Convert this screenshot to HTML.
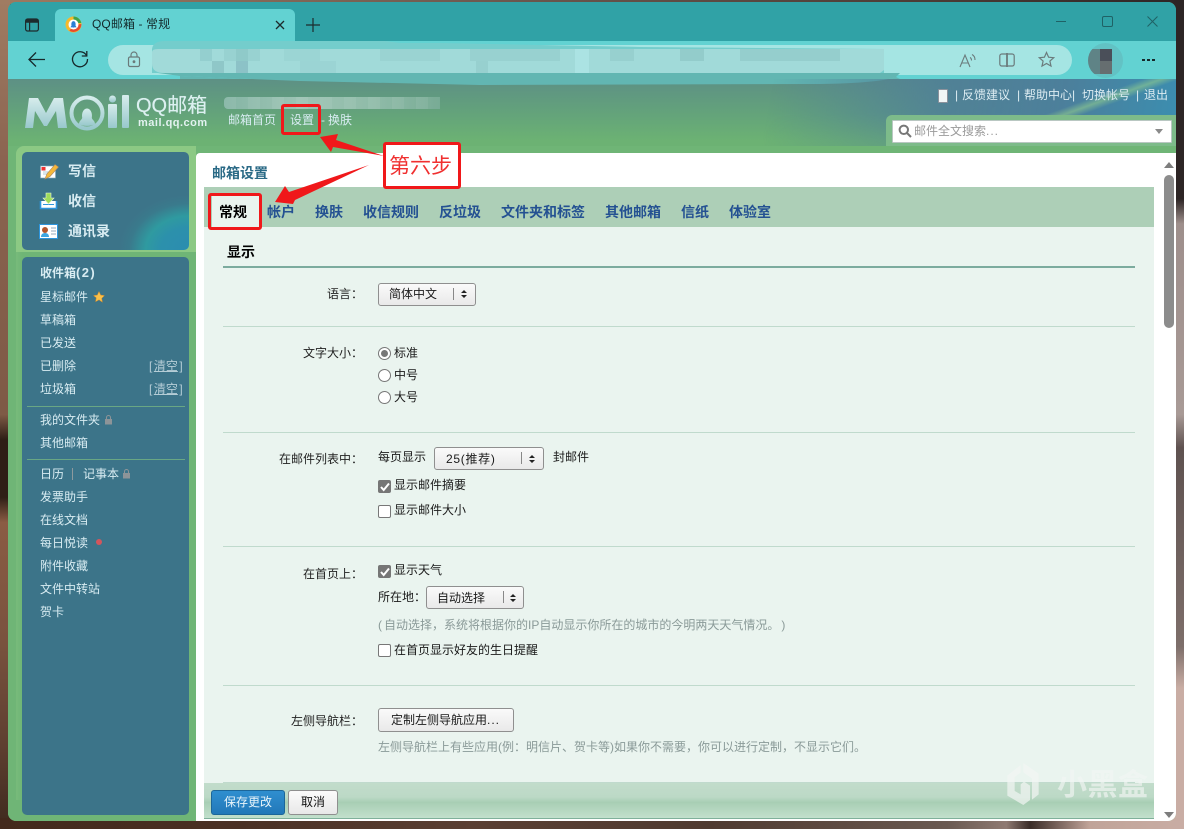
<!DOCTYPE html>
<html lang="zh"><head><meta charset="utf-8"><title>QQ邮箱 - 常规</title>
<style>
html,body{margin:0;padding:0;width:1184px;height:829px;overflow:hidden}
body{position:relative;background:#4f3a30;font:12px/16px "Liberation Sans","Noto Sans CJK SC",sans-serif;color:#1a1a1a}
div,svg{position:absolute}
.t{white-space:nowrap}
.b{font-weight:700}
.s{color:#d8ecf2;font-size:12px;left:40px}
.lb{color:#222;text-align:right;width:120px;left:243px}
.hr{left:223px;width:912px;height:1px;background:#c0dacd}
.tab{top:204px;font-size:14px;font-weight:700;color:#245192;white-space:nowrap}
.sel{height:21px;border:1px solid #8f8f8f;border-radius:3px;background:linear-gradient(#fafafa,#e9e9e9)}
.cb{width:11px;height:11px;border:1px solid #777;border-radius:2px;background:#fff}
.cb.on{background:#767676;border-color:#767676}
.rd{width:11px;height:11px;border:1px solid #777;border-radius:50%;background:#fff}
.gray{color:#8a9a98}
.lk{color:#d8ecf2;white-space:nowrap}
.red{border:3px solid #f0181a;border-radius:3px;box-sizing:border-box}
u.n{text-decoration:none}
</style></head><body>

<!-- desktop backdrop -->
<div style="left:0;top:0;width:1184px;height:4px;background:linear-gradient(90deg,#9c7a60,#6e5a50 40%,#4a3a34 80%,#2d2525)"></div>
<div style="left:0;top:0;width:10px;height:829px;background:linear-gradient(#a07c62 0,#8a6350 20%,#7e5a46 50%,#2f1f16 53%,#2f1f16 60%,#8a5c44 63%,#7a533f 77%,#5e3f30 90%,#3e2a1e 100%)"></div>
<div style="left:1174px;top:0;width:10px;height:829px;background:linear-gradient(#2d2525 0,#2d2525 24%,#9e8f8c 27%,#a89a96 50%,#5f5250 54%,#7d6e6a 78%,#c9ada4 83%,#c9ada4 100%)"></div>
<div style="left:0;top:818px;width:1184px;height:11px;background:linear-gradient(90deg,#43291c 0,#4a3024 20%,#5a3f33 40%,#4f3a30 60%,#6a5a52 80%,#8f7a72 85%,#3a2c28 87%,#c0a398 92%,#c9ada4 100%)"></div>

<!-- window -->
<div style="left:8px;top:2px;width:1168px;height:819px;border-radius:8px;overflow:hidden;background:#6fb576">
  <div style="left:0;top:0;width:1168px;height:39px;background:#30a2a6"></div>
  <div style="left:0;top:39px;width:1168px;height:40px;background:#62d2d2"></div>
</div>

<!-- tab strip -->
<svg style="left:24px;top:17px" width="16" height="16" viewBox="0 0 16 16" fill="none" stroke="#1c2b2d" stroke-width="1.2"><rect x="1.6" y="2" width="12.8" height="12" rx="2"/><path d="M1.6 5.2h12.8M5.6 5.2V14"/><path d="M2 2.5h12v2.5H2z" fill="#1c2b2d" stroke="none"/></svg>
<div style="left:55px;top:9px;width:240px;height:32px;background:#62d2d2;border-radius:6px 6px 0 0"></div>
<svg style="left:65px;top:16px" width="17" height="17" viewBox="0 0 17 17"><circle cx="8.5" cy="8.5" r="8" fill="#f6b92b"/><path d="M8.5.5A8 8 0 0 1 16.3 7H8.5z" fill="#3ea34b"/><path d="M16.4 8a8 8 0 0 1-12 6.900L8.500 9z" fill="#e84a2c"/><circle cx="8.500" cy="8.500" r="5" fill="#fff"/><path d="M5.500 11.500c.2-1 .8-1.400 1-2-.6-2.800.7-4.400 2-4.400s2.600 1.600 2 4.400c.2.600.8 1 1 2l-1.600-.3c-.7.500-2.100.500-2.800 0z" fill="#2a7fd5"/></svg>
<div class="t" style="left:92px;top:16px;font-size:12px;letter-spacing:.1px;color:#14292b">QQ邮箱 - 常规</div>
<svg style="left:274px;top:19px" width="12" height="12" viewBox="0 0 12 12" stroke="#1c2b2d" stroke-width="1.300"><path d="M2 2l8 8M10 2l-8 8"/></svg>
<svg style="left:305px;top:17px" width="16" height="16" viewBox="0 0 16 16" stroke="#1c2b2d" stroke-width="1.200"><path d="M8 1v14M1 8h14"/></svg>
<div style="left:1056px;top:21px;width:10px;height:1px;background:#1f6266"></div>
<div style="left:1102px;top:16px;width:9px;height:9px;border:1px solid #1f6266;border-radius:2px"></div>
<svg style="left:1147px;top:16px" width="11" height="11" viewBox="0 0 11 11" stroke="#1f6266" stroke-width="1"><path d="M.5.5l10 10M10.500.5l-10 10"/></svg>

<!-- toolbar -->
<div style="left:108px;top:45px;width:964px;height:30px;border-radius:15px;background:#a5e5e3"></div>
<svg style="left:127px;top:51px" width="14" height="17" viewBox="0 0 14 17" fill="none" stroke="#6a7a7a" stroke-width="1.200"><rect x="1.500" y="6" width="11" height="9.500" rx="1.500"/><path d="M4 6V4a3 3 0 0 1 6 0v2"/><circle cx="7" cy="10.700" r=".8" fill="#6a7a7a"/></svg>
<svg style="left:27px;top:50px" width="19" height="19" viewBox="0 0 19 19" fill="none" stroke="#16292b" stroke-width="1.300"><path d="M18 9.500H2M9 2.500l-7 7 7 7"/></svg>
<svg style="left:71px;top:50px" width="18" height="18" viewBox="0 0 18 18" fill="none" stroke="#16292b" stroke-width="1.300"><path d="M15.500 5.500A7.500 7.500 0 1 0 16.500 9"/><path d="M15.800 1v5h-5"/></svg>

<!-- blurred url -->
<svg style="left:0;top:0" width="1184" height="110" viewBox="0 0 1184 110">
  <path d="M152 49 Q153 41 165 41 H385 L400 43 H440 L640 47 L884 49 V73 H152 Z" fill="#74cdcc"/>
  <path d="M152 52 Q152 49 158 49 H884 V70 L880 73 H165 Q152 73 152 64 Z" fill="#a1dad9"/>
  <g>
    <rect x="200" y="49" width="12" height="12" fill="#94cfcf"/><rect x="224" y="49" width="36" height="12" fill="#98d2d1"/><rect x="236" y="49" width="12" height="12" fill="#8fcac9"/>
    <rect x="212" y="61" width="12" height="12" fill="#8fc7c8"/><rect x="236" y="61" width="12" height="12" fill="#8cc2c7"/><rect x="284" y="49" width="36" height="12" fill="#9bd5d4"/>
    <rect x="380" y="49" width="60" height="12" fill="#9ad3d2"/><rect x="470" y="49" width="90" height="12" fill="#98d1d0"/><rect x="575" y="49" width="14" height="24" fill="#abe3e3"/>
    <rect x="610" y="49" width="24" height="12" fill="#97d0cf"/><rect x="680" y="49" width="24" height="12" fill="#93cccb"/><rect x="740" y="49" width="100" height="12" fill="#95cecd"/>
    <rect x="476" y="61" width="12" height="12" fill="#97d0cf"/><rect x="300" y="61" width="36" height="12" fill="#9bd4d4"/>
  </g>
  <path d="M158 73 H900 L896 77 Q880 83 820 84 L480 85 L300 81 L180 76 Z" fill="#62b6b2"/>
</svg>

<svg style="left:959px;top:52px" width="18" height="16" viewBox="0 0 18 16" fill="none" stroke="#6b7b7c" stroke-width="1.100"><path d="M1 15L6 3l5 12M2.800 11h6.500M11 5.500c1 .5 1.500 1.500 1.500 3M13 2.500c2 1 3 3 3 5.500"/></svg>
<svg style="left:999px;top:53px" width="16" height="14" viewBox="0 0 16 14" fill="none" stroke="#6b7b7c" stroke-width="1.200"><rect x=".8" y="1" width="14.400" height="12" rx="2"/><path d="M8 0v14" stroke-width="1.800"/></svg>
<svg style="left:1038px;top:51px" width="17" height="17" viewBox="0 0 17 17" fill="none" stroke="#6b7b7c" stroke-width="1.200"><path d="M8.500 1.500l2.100 4.700 5.100.5-3.800 3.400 1.100 5-4.500-2.600-4.500 2.600 1.100-5L1.300 6.700l5.100-.5z"/></svg>
<div style="left:1088px;top:43px;width:35px;height:35px;border-radius:50%;overflow:hidden;background:#62c2c4">
  <div style="left:0;top:6px;width:12px;height:25px;background:#5f8386"></div>
  <div style="left:12px;top:6px;width:12px;height:12px;background:#4a4f59"></div>
  <div style="left:12px;top:18px;width:12px;height:13px;background:#666e70"></div>
</div>
<div style="left:1142px;top:59px;width:3px;height:2px;background:#16292b;box-shadow:5px 0 #16292b,10px 0 #16292b"></div>

<!-- mail header -->
<div style="left:8px;top:79px;width:1168px;height:73px;background:linear-gradient(#5d9085 0,#64a47a 50%,#6cb273 85%)"></div>
<svg style="left:0;top:0" width="1184" height="90" viewBox="0 0 1184 90"><path d="M180 76 L300 81 L480 85 L820 84 Q880 83 896 77 L900 79 H180 Z" fill="#62b6b2"/></svg>
<div style="left:700px;top:79px;width:476px;height:68px;background:linear-gradient(100deg,rgba(79,127,152,0) 15%,rgba(79,127,152,.9) 52%,#4c7f9b 75%,#3b8eb0 100%);-webkit-mask-image:linear-gradient(#000 0,#000 50%,rgba(0,0,0,.5) 100%)"></div>
<div style="left:960px;top:79px;width:216px;height:60px;background:linear-gradient(160deg,rgba(150,210,140,0) 48%,rgba(150,210,140,.55) 53%,rgba(150,210,140,0) 58%)"></div>
<div style="left:8px;top:146px;width:1168px;height:6px;background:#6fb576"></div>

<!-- logo -->
<svg style="left:24px;top:95px" width="108" height="36" viewBox="0 0 108 36"><defs><linearGradient id="lg" x1="0" y1="0" x2="0" y2="1"><stop offset="0" stop-color="#d6ecec"/><stop offset="1" stop-color="#98c8cc"/></linearGradient></defs>
<path d="M1 33L5 3h9l8 15 8-15h9l4 30h-9l-2-17-9 15h-3L11 16 9 33z" fill="url(#lg)"/>
<circle cx="63" cy="18" r="15.500" fill="none" stroke="url(#lg)" stroke-width="4"/>
<path d="M55 29c0-3 2.500-4 3.200-6-1-6 2-9.500 4.800-9.500s5.800 3.500 4.800 9.500c.7 2 3.200 3 3.200 6-2.500 2.500-13.500 2.500-16 0z" fill="url(#lg)"/>
<rect x="84" y="9" width="9" height="24" rx="1" fill="url(#lg)"/><circle cx="88.500" cy="4" r="3.500" fill="url(#lg)"/>
<rect x="98" y="0" width="7" height="33" rx="1" fill="url(#lg)"/></svg>
<div class="t" style="left:136px;top:94px;font-size:20px;line-height:24px;color:#dcf0f0;text-shadow:0 0 .5px #dcf0f0">QQ邮箱</div>
<div class="t b" style="left:138px;top:115px;font-size:11px;color:#e3f2f0;letter-spacing:.5px">mail.qq.com</div>

<!-- blurred name -->
<div style="left:224px;top:97px;width:216px;height:12px;border-radius:4px 0 0 4px;background:repeating-linear-gradient(90deg,rgba(255,255,255,.06) 0,rgba(255,255,255,.06) 12px,rgba(255,255,255,0) 12px,rgba(255,255,255,0) 24px),linear-gradient(90deg,#85b5a5,#9dc4b4 35%,#8fbba8 70%,#78ab95)"></div>
<div class="lk" style="left:228px;top:112px">邮箱首页</div>
<div class="lk" style="left:290px;top:112px">设置</div>
<div class="lk" style="left:321px;top:112px">-</div>
<div class="lk" style="left:328px;top:112px">换肤</div>

<!-- top right links -->
<div style="left:938px;top:89px;width:8px;height:12px;background:#f1f6f6;border:1px solid #8b929c;border-radius:1px;box-sizing:content-box"></div>
<div class="t" style="left:955px;top:87px;color:#dcecf2">|</div>
<div class="t" style="left:962px;top:87px;color:#dcecf2">反馈建议</div>
<div class="t" style="left:1017px;top:87px;color:#dcecf2">|</div>
<div class="t" style="left:1024px;top:87px;color:#dcecf2">帮助中心|</div>
<div class="t" style="left:1082px;top:87px;color:#dcecf2">切换帐号</div>
<div class="t" style="left:1136px;top:87px;color:#dcecf2">|</div>
<div class="t" style="left:1144px;top:87px;color:#dcecf2">退出</div>
<!-- search -->
<div style="left:886px;top:115px;width:290px;height:31px;background:#7dbb8a;border-radius:6px 0 0 0"></div>
<div style="left:892px;top:120px;width:278px;height:21px;background:#fff;border:1px solid #b9c7c2;border-radius:1px"></div>
<svg style="left:898px;top:124px" width="14" height="14" viewBox="0 0 14 14" fill="none" stroke="#777" stroke-width="2"><circle cx="5.800" cy="5.800" r="4.200"/><path d="M9 9l4 4"/></svg>
<div class="t" style="left:914px;top:123px;color:#9a9a9a">邮件全文搜索<u class="n" style="letter-spacing:1px">...</u></div>
<div style="left:1155px;top:129px;border:4px solid transparent;border-top:5px solid #8a8a8a;border-bottom:0"></div>

<!-- sidebar -->
<div style="left:16px;top:146px;width:180px;height:675px;background:#8cc984;border-radius:8px 0 0 8px"></div>
<div style="left:16px;top:252px;width:180px;height:569px;background:linear-gradient(90deg,#78bb7b,#6fb576 6px)"></div>
<div style="left:8px;top:800px;width:188px;height:21px;background:#6fb576;border-radius:0 0 0 8px"></div>
<div style="left:22px;top:152px;width:167px;height:98px;background:radial-gradient(ellipse 70px 55px at 100% 100%,#2b8db0 0,#2c90ac 40%,#2f9aa0 62%,#3a7a8c 85%,#3c7489 100%);border-radius:5px"></div>
<div style="left:22px;top:257px;width:167px;height:558px;background:#3c7489;border-radius:5px"></div>

<!-- icons -->
<svg style="left:40px;top:163px" width="20" height="18" viewBox="0 0 20 18"><rect x=".5" y="3" width="15" height="12" fill="#fff" stroke="#8ab" stroke-width=".6"/><rect x="1.500" y="4" width="4" height="3.500" fill="#e33"/><path d="M3 9h6M3 11h4" stroke="#9bc" stroke-width=".8"/><path d="M5 16l1.800-5 8.200-9.500 3.500 2.500-8.500 9.500z" fill="#f5b83a" stroke="#a86" stroke-width=".6"/></svg>
<svg style="left:39px;top:192px" width="19" height="18" viewBox="0 0 19 18"><path d="M1.500 9v7.500h16V9" fill="#fff" stroke="#2d95dd" stroke-width="1.600"/><path d="M4 12.500h11" stroke="#2d95dd" stroke-width="1"/><path d="M7 1h5v5h3l-5.500 6L4 6h3z" fill="#9fdc5a" stroke="#e9f7d8" stroke-width=".6"/></svg>
<svg style="left:39px;top:224px" width="19" height="15" viewBox="0 0 19 15"><rect x=".5" y=".5" width="18" height="14" fill="#fff" stroke="#2d95dd"/><circle cx="6" cy="6" r="3" fill="#b3552a"/><path d="M2 13c0-3 2-4 4-4s4 1 4 4z" fill="#3da5e0"/><path d="M12 4h5M12 7h5M12 10h5" stroke="#9ab" stroke-width="1"/></svg>
<div class="t b" style="left:68px;top:163px;font-size:14px;color:#d8ecf2">写信</div>
<div class="t b" style="left:68px;top:193px;font-size:14px;color:#d8ecf2">收信</div>
<div class="t b" style="left:68px;top:223px;font-size:14px;color:#d8ecf2">通讯录</div>

<div class="t s b" style="top:265px">收件箱<u class="n" style="font-size:13px;letter-spacing:1.400px">(2)</u></div>
<div class="t s" style="top:289px">星标邮件</div>
<svg style="left:93px;top:291px" width="12" height="12" viewBox="0 0 12 12"><path d="M6 .5l1.700 3.600 3.800.5-2.800 2.700.7 3.900L6 8.800l-3.400 1.900.7-3.900L.5 4.600l3.800-.5z" fill="#f9c14a" stroke="#d68a2a" stroke-width=".5"/></svg>
<div class="t s" style="top:312px">草稿箱</div>
<div class="t s" style="top:335px">已发送</div>
<div class="t s" style="top:358px">已删除</div>
<div class="t s" style="top:381px">垃圾箱</div>
<div class="t" style="left:149px;top:358px;color:#b5cdd6">[<u style="margin:0 1.500px">清空</u>]</div>
<div class="t" style="left:149px;top:381px;color:#b5cdd6">[<u style="margin:0 1.500px">清空</u>]</div>
<div style="left:27px;top:406px;width:158px;height:1px;background:#69a784"></div>
<div class="t s" style="top:412px">我的文件夹</div>
<svg style="left:104px;top:415px" width="9" height="10" viewBox="0 0 9 10" fill="#8d9498"><rect x="1" y="4" width="7" height="5.500"/><path d="M2.500 4V2.500a2 2 0 0 1 4 0V4" fill="none" stroke="#8d9498"/></svg>
<div class="t s" style="top:435px">其他邮箱</div>
<div style="left:27px;top:459px;width:158px;height:1px;background:#69a784"></div>
<div class="t s" style="top:466px">日历</div>
<div style="left:72px;top:468px;width:1px;height:12px;background:#8d9a9e"></div>
<div class="t s" style="left:83px;top:466px">记事本</div>
<svg style="left:122px;top:469px" width="9" height="10" viewBox="0 0 9 10" fill="#8d9498"><rect x="1" y="4" width="7" height="5.500"/><path d="M2.500 4V2.500a2 2 0 0 1 4 0V4" fill="none" stroke="#8d9498"/></svg>
<div class="t s" style="top:489px">发票助手</div>
<div class="t s" style="top:512px">在线文档</div>
<div class="t s" style="top:535px">每日悦读</div>
<div style="left:96px;top:539px;width:6px;height:6px;border-radius:50%;background:#d4555c"></div>
<div class="t s" style="top:558px">附件收藏</div>
<div class="t s" style="top:581px">文件中转站</div>
<div class="t s" style="top:604px">贺卡</div>

<!-- main -->
<div style="left:196px;top:153px;width:980px;height:668px;background:#fff;border-radius:4px 0 8px 0"></div>
<div class="t b" style="left:212px;top:165px;font-size:14px;color:#2a6a86">邮箱设置</div>
<div style="left:204px;top:187px;width:950px;height:40px;background:#adcfb7"></div>
<div style="left:204px;top:227px;width:950px;height:556px;background:#eaf4ef"></div>
<div style="left:212px;top:196px;width:47px;height:31px;background:#eaf4ef"></div>
<div class="t b" style="left:219px;top:204px;font-size:14px;color:#000">常规</div>
<div class="tab" style="left:267px">帐户</div>
<div class="tab" style="left:315px">换肤</div>
<div class="tab" style="left:363px">收信规则</div>
<div class="tab" style="left:439px">反垃圾</div>
<div class="tab" style="left:501px">文件夹和标签</div>
<div class="tab" style="left:605px">其他邮箱</div>
<div class="tab" style="left:681px">信纸</div>
<div class="tab" style="left:729px">体验室</div>

<div class="t b" style="left:227px;top:244px;font-size:14px;color:#000">显示</div>
<div style="left:223px;top:266px;width:912px;height:2px;background:#7cab9e"></div>

<div class="t lb" style="top:286px">语言：</div>
<div class="sel" style="left:378px;top:283px;width:96px"></div>
<div class="t" style="left:389px;top:286px">简体中文</div>
<div style="left:453px;top:288px;width:1px;height:12px;background:#888"></div>
<svg style="left:461px;top:290px" width="6" height="8" viewBox="0 0 6 8" fill="#222"><path d="M3 0l3 3H0zM3 8L0 5h6z"/></svg>
<div class="hr" style="top:326px"></div>

<div class="t lb" style="top:345px">文字大小：</div>
<div class="rd" style="left:378px;top:347px"></div><div style="left:381px;top:350px;width:7px;height:7px;border-radius:50%;background:#777"></div>
<div class="t" style="left:394px;top:345px">标准</div>
<div class="rd" style="left:378px;top:369px"></div>
<div class="t" style="left:394px;top:367px">中号</div>
<div class="rd" style="left:378px;top:391px"></div>
<div class="t" style="left:394px;top:389px">大号</div>
<div class="hr" style="top:432px"></div>

<div class="t lb" style="top:451px">在邮件列表中：</div>
<div class="t" style="left:378px;top:449px">每页显示</div>
<div class="sel" style="left:434px;top:447px;width:108px"></div>
<div class="t" style="left:446px;top:451px;letter-spacing:.7px">25(推荐)</div>
<div style="left:521px;top:452px;width:1px;height:12px;background:#888"></div>
<svg style="left:529px;top:455px" width="6" height="8" viewBox="0 0 6 8" fill="#222"><path d="M3 0l3 3H0zM3 8L0 5h6z"/></svg>
<div class="t" style="left:553px;top:449px">封邮件</div>
<div class="cb on" style="left:378px;top:480px"></div>
<svg style="left:380px;top:482px" width="10" height="10" viewBox="0 0 10 10" fill="none" stroke="#fff" stroke-width="2"><path d="M1 5l2.700 3L9 1.500"/></svg>
<div class="t" style="left:394px;top:477px">显示邮件摘要</div>
<div class="cb" style="left:378px;top:505px"></div>
<div class="t" style="left:394px;top:502px">显示邮件大小</div>
<div class="hr" style="top:546px"></div>

<div class="t lb" style="top:566px">在首页上：</div>
<div class="cb on" style="left:378px;top:565px"></div>
<svg style="left:380px;top:567px" width="10" height="10" viewBox="0 0 10 10" fill="none" stroke="#fff" stroke-width="2"><path d="M1 5l2.700 3L9 1.500"/></svg>
<div class="t" style="left:394px;top:562px">显示天气</div>
<div class="t" style="left:378px;top:589px">所在地：</div>
<div class="sel" style="left:426px;top:586px;width:96px"></div>
<div class="t" style="left:437px;top:590px">自动选择</div>
<div style="left:503px;top:591px;width:1px;height:12px;background:#888"></div>
<svg style="left:510px;top:594px" width="6" height="8" viewBox="0 0 6 8" fill="#222"><path d="M3 0l3 3H0zM3 8L0 5h6z"/></svg>
<div class="t gray" style="left:378px;top:617px">(<u class="n" style="margin-left:2px">自动选择，系统将根据你的IP自动显示你所在的城市的今明两天天气情况。</u><u class="n" style="margin-left:8px">)</u></div>
<div class="cb" style="left:378px;top:644px"></div>
<div class="t" style="left:394px;top:642px">在首页显示好友的生日提醒</div>
<div class="hr" style="top:685px"></div>

<div class="t lb" style="top:713px">左侧导航栏：</div>
<div class="sel" style="left:378px;top:708px;width:134px;height:22px"></div>
<div class="t" style="left:391px;top:712px">定制左侧导航应用<u class="n" style="letter-spacing:1px">...</u></div>
<div class="t gray" style="left:378px;top:739px">左侧导航栏上有些应用(例：明信片、贺卡等)如果你不需要，你可以进行定制，不显示它们。</div>
<div class="hr" style="top:782px"></div>

<!-- footer -->
<div style="left:204px;top:783px;width:950px;height:36px;background:linear-gradient(#c2dccb 0,#bcd9c6 40%,#a8ceb4 55%,#c2e0cc 100%);border-bottom:1px solid #7fb09a;box-sizing:border-box"></div>
<div class="t" style="left:211px;top:790px;width:72px;height:23px;background:linear-gradient(#2f8fd0,#2278b8);border:1px solid #1c6699;border-radius:3px;color:#e8f4fa;line-height:23px;text-align:center">保存更改</div>
<div class="t" style="left:288px;top:790px;width:48px;height:23px;background:linear-gradient(#fbfbfb,#e8e8e8);border:1px solid #8f8f8f;border-radius:3px;color:#111;line-height:23px;text-align:center">取消</div>

<!-- scrollbar -->
<div style="left:1164px;top:162px;border:5px solid transparent;border-bottom:6px solid #7d7d7d;border-top:0"></div>
<div style="left:1164px;top:175px;width:10px;height:153px;background:#8c8c8c;border-radius:5px"></div>
<div style="left:1164px;top:812px;border:5px solid transparent;border-top:6px solid #7d7d7d;border-bottom:0"></div>

<!-- annotations -->
<div class="red" style="left:281px;top:104px;width:40px;height:31px"></div>
<div class="red" style="left:208px;top:193px;width:54px;height:37px"></div>
<div class="red" style="left:383px;top:142px;width:78px;height:47px;background:#fff"></div>
<div class="t" style="left:389px;top:153px;font-size:21px;line-height:28px;color:#f03030">第六步</div>
<svg style="left:0;top:0" width="400" height="220" viewBox="0 0 400 220" fill="#f0181a">
  <path d="M320 137 L338 134 L336 140 L384 156 L333 147 L331 152 Z"/>
  <path d="M275 202 L285 186 L289 192 L369 165 L295 200 L293 204 Z"/>
</svg>

<!-- watermark -->
<svg style="left:1000px;top:755px;opacity:.7" width="160" height="60" viewBox="0 0 480 180" fill="#f3f6f4"><path d="M22 62L62 30V52L44 66V108L62 118V88L72 80L90 92V135L70 150L22 122Z"/><path d="M70 24L116 56V118L96 134V70L70 52Z"/></svg>
<div class="t b" style="left:1057px;top:768px;font-size:30px;line-height:36px;color:#f3f6f4;opacity:.65;letter-spacing:.5px">小黑盒</div>
</body></html>
